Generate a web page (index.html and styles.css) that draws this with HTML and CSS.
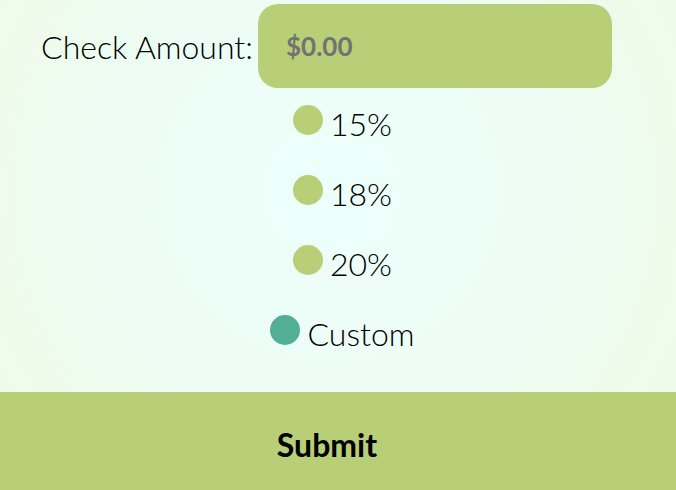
FILE: index.html
```html
<!DOCTYPE html>
<html>
<head>
<meta charset="utf-8">
<link rel="stylesheet" href="styles.css">
</head>
<body>
<form class="tip-form">
  <div class="amount-row">
    <label class="amount-label" for="amt">Check Amount:</label>
    <input class="amount-input" id="amt" type="text" placeholder="$0.00">
  </div>
  <div class="options">
    <label class="option"><input type="radio" name="tip" class="radio"><span>15%</span></label>
    <label class="option"><input type="radio" name="tip" class="radio"><span>18%</span></label>
    <label class="option"><input type="radio" name="tip" class="radio"><span>20%</span></label>
    <label class="option"><input type="radio" name="tip" class="radio custom" checked><span>Custom</span></label>
  </div>
  <button type="button" class="submit">Submit</button>
</form>
</body>
</html>
```
FILE: styles.css
```css
html, body {
  margin: 0;
  padding: 0;
  height: 490px;
  overflow: hidden;
}
body {
  font-family: Lato, "Liberation Sans", sans-serif;
  background: radial-gradient(circle at 330px 190px, #edfffb 0px, #edfdf6 200px, #eefbeb 340px, #f0fbe7 500px);
  color: #000;
}
.tip-form {
  display: flex;
  flex-direction: column;
}
.amount-row {
  display: flex;
  align-items: center;
  justify-content: center;
  padding-top: 4px;
  padding-right: 23px;
  gap: 5px;
}
.amount-label {
  font-size: 32px;
  font-weight: 300;
  color: #000;
}
.amount-input {
  width: 354px;
  height: 84px;
  box-sizing: border-box;
  border: none;
  border-radius: 20px;
  background: #b8cf78;
  padding: 0 28px;
  font-family: Lato, "Liberation Sans", sans-serif;
  font-size: 26px;
  font-weight: 700;
  outline: none;
}
.amount-input::placeholder {
  color: #727272;
}
.options {
  display: flex;
  flex-direction: column;
  align-items: center;
  padding-left: 9px;
  margin-top: -3px;
}
.option {
  display: flex;
  align-items: center;
  gap: 7px;
  height: 70px;
  font-size: 32px;
  font-weight: 300;
}
.option span {
  position: relative;
  top: 3px;
}
.radio {
  appearance: none;
  -webkit-appearance: none;
  margin: 0;
  width: 30px;
  height: 30px;
  border-radius: 50%;
  background: #b8cf78;
}
.radio.custom {
  background: #52ae94;
}
.submit {
  margin-top: 27px;
  height: 98px;
  border: none;
  background: #b8cf78;
  font-family: Lato, "Liberation Sans", sans-serif;
  font-size: 32px;
  font-weight: 700;
  color: #000;
  padding: 6px 22px 0 0;
}
```
